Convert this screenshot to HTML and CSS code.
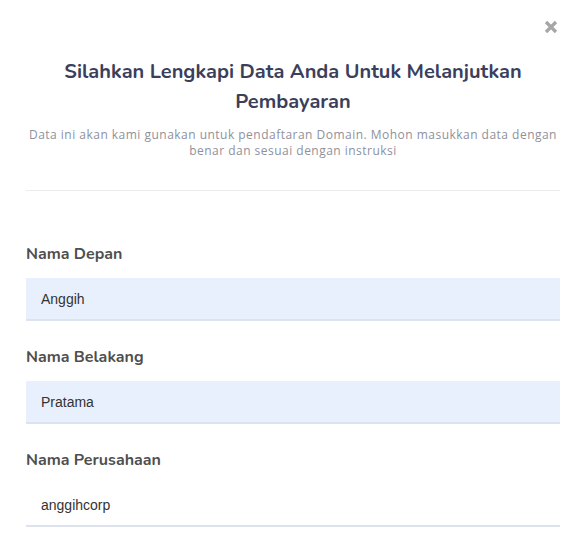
FILE: index.html
```html
<!DOCTYPE html>
<html lang="id">
<head>
<meta charset="utf-8">
<title>Lengkapi Data</title>
<link rel="stylesheet" href="styles.css">
</head>
<body>
<div class="modal">
  <button class="close" aria-label="Tutup">
    <svg width="14" height="14" viewBox="0 0 14 14"><path d="M2 2 L12 12 M12 2 L2 12" stroke="#a6a6a6" stroke-width="3.2" stroke-linecap="butt"/></svg>
  </button>
  <div class="header">
    <h2 class="title">Silahkan Lengkapi Data Anda Untuk Melanjutkan Pembayaran</h2>
    <p class="subtitle">Data ini akan kami gunakan untuk pendaftaran Domain. Mohon masukkan data dengan benar dan sesuai dengan instruksi</p>
  </div>
  <form class="form">
    <div class="field">
      <label class="label">Nama Depan</label>
      <input class="input filled" type="text" value="Anggih">
    </div>
    <div class="field">
      <label class="label">Nama Belakang</label>
      <input class="input filled" type="text" value="Pratama">
    </div>
    <div class="field">
      <label class="label">Nama Perusahaan</label>
      <input class="input" type="text" value="anggihcorp">
    </div>
  </form>
</div>
</body>
</html>
```

FILE: styles.css
```css
* { box-sizing: border-box; }
html, body { margin: 0; padding: 0; background: #fff; }
body { font-family: "Nunito", "Lato", "Noto Sans", sans-serif; }

.modal {
  position: relative;
  width: 583px;
  padding: 0 23px 0 26px;
}

.close {
  position: absolute;
  top: 20px;
  right: 25px;
  width: 14px;
  height: 14px;
  padding: 0;
  border: 0;
  background: none;
  display: flex;
}

.header {
  padding-top: 57px;
  padding-bottom: 31px;
  border-bottom: 1px solid #ececec;
  text-align: center;
}

.title {
  margin: 0;
  padding: 0 28px;
  font-size: 20px;
  font-weight: 700;
  line-height: 30px;
  color: #3b3f5c;
}

.subtitle {
  margin: 10px 0 0;
  font-family: "Open Sans", "Lato", sans-serif;
  font-size: 12px;
  letter-spacing: 0.48px;
  line-height: 16px;
  color: #8e919c;
}

.form {
  padding-top: 54px;
  display: flex;
  flex-direction: column;
  gap: 27px;
}

.field { display: flex; flex-direction: column; gap: 15px; }

.label {
  font-size: 16px;
  font-weight: 700;
  line-height: 18px;
  color: #4f4f4f;
}

.input {
  width: 100%;
  height: 43px;
  padding: 0 15px;
  border: 0;
  border-bottom: 2px solid #dce3ec;
  background: #fff;
  font-family: "Liberation Sans", Arial, sans-serif;
  font-size: 14px;
  color: #333;
  outline: none;
}

.input.filled { background: #e8f0fe; }
```
